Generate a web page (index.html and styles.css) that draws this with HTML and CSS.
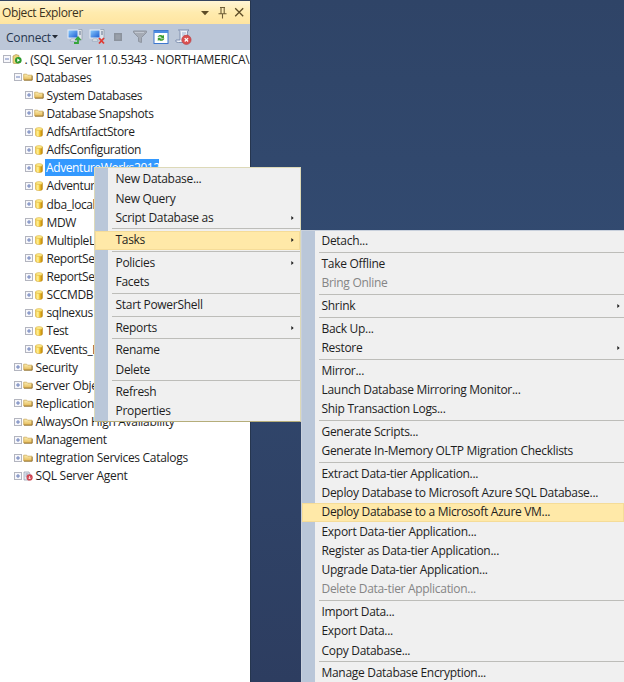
FILE: index.html
```html
<!DOCTYPE html>
<html lang="en">
<head>
<meta charset="utf-8">
<title>Object Explorer</title>
<link rel="stylesheet" href="styles.css">
</head>
<body>
<svg class="defs" aria-hidden="true">
  <defs>
    <linearGradient id="gold"><stop offset="0" stop-color="#f4cf45"/><stop offset=".35" stop-color="#fff2a0"/><stop offset=".6" stop-color="#f0c22c"/><stop offset="1" stop-color="#b87e08"/></linearGradient>
    <linearGradient id="fold" x2="0" y2="1"><stop offset="0" stop-color="#fbeeb4"/><stop offset="1" stop-color="#e5b955"/></linearGradient>
    <linearGradient id="screen" x2="1" y2="1"><stop offset="0" stop-color="#8fd0ff"/><stop offset="1" stop-color="#1657d0"/></linearGradient>
  </defs>
  <symbol id="plus" viewBox="0 0 8 8"><rect x=".5" y=".5" width="7" height="7" fill="#f7f7fb" stroke="#b3b5bf"/><path d="M2 4h4M4 2v4" stroke="#6076b4" stroke-width=".9"/></symbol>
  <symbol id="minus" viewBox="0 0 8 8"><rect x=".5" y=".5" width="7" height="7" fill="#f7f7fb" stroke="#b3b5bf"/><path d="M2 4h4" stroke="#6076b4" stroke-width=".9"/></symbol>
  <symbol id="folder" viewBox="0 0 10 10"><path d="M.7 8v-5.800h3l1 1h4.300v4.800z" fill="url(#fold)" stroke="#c9a24a" stroke-width=".7"/><path d="M1 8.200h8.200v-4.400" fill="none" stroke="#86672a" stroke-width=".8"/></symbol>
  <symbol id="db" viewBox="0 0 10 10"><path d="M1.500 2v6c0 2.200 7 2.200 7 0v-6z" fill="url(#gold)" stroke="#c08b14" stroke-width=".4"/><ellipse cx="5" cy="2" rx="3.500" ry="1.500" fill="#fbe884" stroke="#cf9c25" stroke-width=".4"/></symbol>
  <symbol id="server" viewBox="0 0 10 10"><path d="M1 2l3-1.500 3 1v7.500l-4 1-2-1z" fill="#ecd47d" stroke="#a48b45" stroke-width=".6"/><circle cx="6.300" cy="6.200" r="3.300" fill="#2d9a2d"/><path d="M5.300 4.500v3.500l2.700-1.700z" fill="#fff"/></symbol>
  <symbol id="agent" viewBox="0 0 10 10"><path d="M1 1h5l1 2v6h-6z" fill="#e7ecf4" stroke="#8d97a8" stroke-width=".7"/><path d="M2.500 3h3M2.500 5h2" stroke="#68778e" stroke-width=".7"/><circle cx="6.600" cy="6.400" r="3.100" fill="#cf4450"/><path d="M6.600 5v2.800M5.300 6.700l1.300 1.300 1.300-1.300" fill="none" stroke="#fff" stroke-width=".8"/></symbol>
  <symbol id="pc" viewBox="0 0 18 18"><path d="M12 1.500h4v10l-3 1.500" fill="#dfe4ea" stroke="#8e99a8" stroke-width=".7"/><path d="M13 4h2M13 6h2" stroke="#62738b"/><rect x="2" y="2" width="10" height="8" fill="url(#screen)" stroke="#e8edf5"/><path d="M5 11h4l1 2h-6z" fill="#edf0f4" stroke="#8190a5" stroke-width=".5"/></symbol>
</svg>

<aside class="panel">
  <header class="titlebar">
    <h1 class="title">Object Explorer</h1>
    <svg class="window-icons" viewBox="0 0 48 16"><path d="M4 6h8l-4 4.200z" fill="#5d4c26"/><path d="M23 2.500h5M24 2.500v6M27.200 2.500v6M21.500 8.700h8M25.500 9v4.500" fill="none" stroke="#6e5d36" stroke-width="1.100"/><path d="M38.200 3.200l8 8M46.200 3.200l-8 8" stroke="#5d4c26" stroke-width="1.300"/></svg>
  </header>
  <div class="toolbar">
    <span class="connect">Connect</span>
    <svg class="caret" viewBox="0 0 6 4"><path d="M0 0h6l-3 3.500z" fill="#242a35"/></svg>
    <svg class="tool" viewBox="0 0 18 18"><use href="#pc"/><path d="M8 15h4v-5M9.500 12l2.500-2.600 2.500 2.600" fill="none" stroke="#35a53a" stroke-width="1.800"/></svg>
    <svg class="tool" viewBox="0 0 18 18"><use href="#pc"/><path d="M11 10l5 5.500M16 10l-5 5.500" stroke="#e03b34" stroke-width="1.800"/></svg>
    <svg class="tool" viewBox="0 0 18 18"><rect x="5" y="5" width="8" height="8" fill="#8b929d"/><rect x="6.500" y="6.500" width="5" height="5" fill="#999fa9"/></svg>
    <svg class="tool" viewBox="0 0 18 18"><path d="M2.500 3h13v1.500l-5 5v5l-3-1v-4l-5-5z" fill="#a5abb5" stroke="#8f96a2"/><path d="M4 4.500h9" stroke="#c2c8d2"/></svg>
    <svg class="tool" viewBox="0 0 18 18"><rect x="2" y="2.500" width="14" height="13" fill="#fff" stroke="#3d78ce"/><path d="M2 4h14" stroke="#4b8ce3" stroke-width="2"/><path d="M5.500 9c1-2.500 4-2.500 5.500-1.200l1-1v3.700h-3.700l1.300-1.300c-1-1-2.500-.7-4.100-.2zM12.500 10.500c-1 2.600-4 3-5.500 1.500l-1.200 1v-3.300h3.400l-1.200 1.100c1.300.8 2.700.4 4.500-.3z" fill="#3b9d31"/></svg>
    <svg class="tool" viewBox="0 0 18 18"><path d="M4.500 2h10.500c-2 .5-1.500 3-1.500 5v7.500h-9c-2 0-3.500-1-2.500-2.500h4v-7.500c0-1.500-.5-2-1.500-2.500z" fill="#eef2f9" stroke="#7789aa" stroke-width=".9"/><path d="M8 5h4M8 7h3" stroke="#9eb1cf"/><circle cx="12.400" cy="11.800" r="4.700" fill="#d94f4f" stroke="#b54046" stroke-width=".6"/><path d="M10.700 10.100l3.400 3.400M14.100 10.100l-3.400 3.400" stroke="#fff" stroke-width="1.300"/></svg>
  </div>
  <ul class="tree" id="tree"></ul>
</aside>

<ul class="menu menu-main" id="main-menu"></ul>
<ul class="menu menu-tasks" id="tasks-menu"></ul>
<script src="script.js"></script>
</body>
</html>
```
FILE: styles.css
```css
* { box-sizing: border-box; }
body {
  margin: 0;
  width: 624px;
  height: 682px;
  overflow: hidden;
  position: relative;
  background: linear-gradient(180deg, #2f4467, #324a70 35%, #2d3d60);
  color: #1e1e1e;
  font: 12px/18px "Open Sans", "Noto Sans", sans-serif;
  letter-spacing: -0.3px;
  white-space: nowrap;
}
ul { margin: 0; padding: 0; list-style: none; }
svg { flex: none; }
.defs { position: absolute; width: 0; height: 0; }

.panel {
  width: 251px;
  height: 682px;
  overflow: hidden;
  background: #fff;
  border-right: 1px solid #26364f;
  border-top: 1px solid #34435f;
}
.titlebar {
  display: flex;
  align-items: center;
  justify-content: space-between;
  height: 23px;
  padding: 0 5px 0 2px;
  background: linear-gradient(#fff5d5, #ffebae 50%, #ffe5a0);
}
.title { margin: 0; font-size: 12px; font-weight: 400; letter-spacing: -0.38px; color: #3b321d; }
.window-icons { width: 48px; height: 16px; }
.toolbar {
  display: flex;
  align-items: center;
  height: 26px;
  padding-left: 6px;
  background: #bcc7d8;
  color: #26364f;
}
.connect { width: 44px; padding-top: 1px; letter-spacing: -0.2px; }
.caret { width: 6px; height: 4px; margin: 0 8px 0 2px; }
.tool { width: 18px; height: 18px; margin-right: 3.500px; }

.row { display: flex; align-items: center; height: 18.130px; }
.level-0 { padding-left: 3px; }
.level-1 { padding-left: 14px; }
.level-2 { padding-left: 25px; letter-spacing: -0.4px; }
.toggle { width: 8px; height: 8px; }
.icon { width: 10px; height: 10px; margin-left: 1px; }
.label { height: 17px; line-height: 17px; padding: 0 1px; margin-left: 1.500px; }
.level-0 .label { letter-spacing: -0.26px; }
.selected .label { background: #3399ff; color: #fff; width: 114px; margin-left: 1px; }

.menu {
  position: absolute;
  background: linear-gradient(90deg, #bac7d9 13px, #f0f0f0 13px);
  border: 1px solid #dedfc9;
}
.menu-main {
  left: 94px;
  top: 167px;
  width: 207px;
  height: 255px;
  padding-top: 1.600px;
  border-color: #ddd9b8;
  border-bottom-color: #b5ad7a;
}
.menu-tasks {
  left: 301px;
  top: 230px;
  width: 324px;
  height: 460px;
  padding-top: .8px;
  border-color: #c8d0dc;
}
.item {
  display: flex;
  align-items: center;
  justify-content: space-between;
  height: 19.300px;
  padding: 0 6px 0 20.500px;
}
.menu-tasks .item { padding-right: 4px; padding-left: 19.500px; }
.item.active { background: #ffe9a8; box-shadow: inset 0 0 0 1px #f5dc98; }
.item.disabled { color: #858585; }
.arrow { width: 3px; height: 4px; }
.separator { height: 3.330px; padding-top: 1px; margin-left: 17px; }
.separator::before { content: ""; display: block; height: 1px; background: #bdbdb9; }
```
FILE: script.js
```js
const tree = [
  [0, 'minus', 'server', '. (SQL Server 11.0.5343 - NORTHAMERICA\\'],
  [1, 'minus', 'folder', 'Databases'],
  [2, 'plus', 'folder', 'System Databases'],
  [2, 'plus', 'folder', 'Database Snapshots'],
  ...['AdfsArtifactStore', 'AdfsConfiguration', 'AdventureWorks2012', 'AdventureWorks', 'dba_local', 'MDW', 'MultipleLogs', 'ReportServer', 'ReportServer', 'SCCMDB', 'sqlnexus', 'Test', 'XEvents_DB'].map(name => [2, 'plus', 'db', name]),
  ...['Security', 'Server Objects', 'Replication', 'AlwaysOn High Availability', 'Management', 'Integration Services Catalogs'].map(name => [1, 'plus', 'folder', name]),
  [1, 'plus', 'agent', 'SQL Server Agent']
];
document.getElementById('tree').innerHTML = tree.map(([level, toggle, icon, name]) =>
  `<li class="row level-${level}${name === 'AdventureWorks2012' ? ' selected' : ''}"><svg class="toggle"><use href="#${toggle}"/></svg><svg class="icon"><use href="#${icon}"/></svg><span class="label">${name}</span></li>`).join('');

// Each inner array is a group; groups are divided by a separator.
// Suffixes: ">" opens a submenu, "*" is highlighted, "!" is disabled.
const mainMenu = [
  ['New Database...', 'New Query', 'Script Database as>'],
  ['Tasks>*'],
  ['Policies>', 'Facets'],
  ['Start PowerShell'],
  ['Reports>'],
  ['Rename', 'Delete'],
  ['Refresh', 'Properties']
];
const tasksMenu = [
  ['Detach...'],
  ['Take Offline', 'Bring Online!'],
  ['Shrink>'],
  ['Back Up...', 'Restore>'],
  ['Mirror...', 'Launch Database Mirroring Monitor...', 'Ship Transaction Logs...'],
  ['Generate Scripts...', 'Generate In-Memory OLTP Migration Checklists'],
  ['Extract Data-tier Application...', 'Deploy Database to Microsoft Azure SQL Database...', 'Deploy Database to a Microsoft Azure VM...*', 'Export Data-tier Application...', 'Register as Data-tier Application...', 'Upgrade Data-tier Application...', 'Delete Data-tier Application...!'],
  ['Import Data...', 'Export Data...', 'Copy Database...'],
  ['Manage Database Encryption...']
];
const arrow = '<svg class="arrow" viewBox="0 0 3 5"><path d="M0 0l3 2.500-3 2.500z" fill="#1e1e1e"/></svg>';
function item(entry) {
  const text = entry.replace(/[>*!]/g, '');
  const state = entry.includes('*') ? ' active' : entry.includes('!') ? ' disabled' : '';
  return `<li class="item${state}"><span>${text}</span>${entry.includes('>') ? arrow : ''}</li>`;
}
function render(id, groups) {
  document.getElementById(id).innerHTML = groups.map(group => group.map(item).join('')).join('<li class="separator"></li>');
}
render('main-menu', mainMenu);
render('tasks-menu', tasksMenu);
```
